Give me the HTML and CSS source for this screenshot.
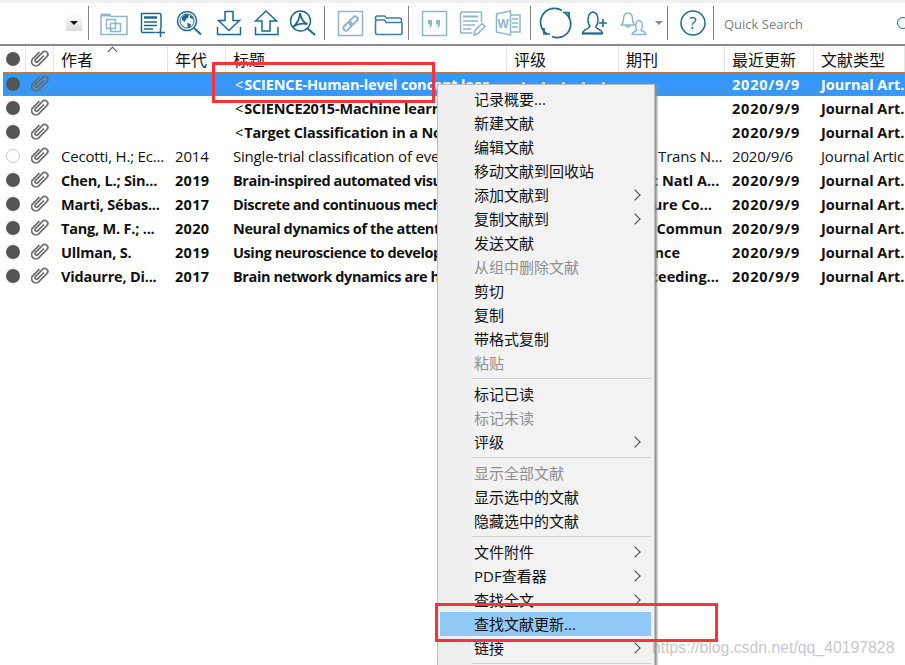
FILE: index.html
```html
<!DOCTYPE html>
<html lang="en">
<head>
  <meta charset="UTF-8">
  <title>EndNote</title>
  <link rel="stylesheet" href="styles.css">
</head>
<body>
  <svg class="defs" width="0" height="0">
    <symbol id="clip" viewBox="0 0 18 20">
      <path d="M13 6.500 L6.800 12.700 a1.600 1.600 0 0 1 -2.300 -2.300 L11.600 3.300 a3 3 0 0 1 4.300 4.200 L7.900 15.600 a4.200 4.200 0 0 1 -6 -6 L8.500 3" fill="none" stroke="#6a6a6a" stroke-width="1.700"/>
    </symbol>
  </svg>

  <div class="toolbar">
    <div class="dropdown"><span class="caret"></span></div>
    <div class="sep first"></div>

    <svg width="38" height="34" viewBox="94 6 38 34" class="faded">
      <path d="M101 15 h9 M101 14.500 v20 h26 v-18 h-16 l-1 -2" />
      <path d="M101 15 h9" stroke-width="3" />
      <path d="M106.500 19.500 h9 v9 h-9 z" />
      <path d="M110.500 23.500 h10 v8 h-10 z" />
    </svg>
    <svg width="39" height="34" viewBox="132 6 39 34" class="dark">
      <path d="M161 28 v-13 a1.500 1.500 0 0 0 -1.500 -1.500 h-18 v18 a1 1 0 0 0 1 1 h13" />
      <path d="M144 17.500 h13" stroke-width="2.500" />
      <path d="M144 22 h13 M144 25.500 h13 M144 29 h9" />
      <path d="M160.500 28 v9 M156 32.500 h9" />
    </svg>
    <svg width="38" height="34" viewBox="171 6 38 34" class="dark">
      <circle cx="187" cy="21" r="9.500" />
      <circle cx="187" cy="21" r="7" stroke-width="1" />
      <path d="M182 17 l4 -3 3 1 -1 3 -2 1 -1 3 -3 -2 z M187 23 l4 1 -1 4 -2 0 z M190 15 l3 2 0 2 -3 -1 z" class="fill-dark" />
      <path d="M194 28 l7 6.500" stroke-width="2" />
    </svg>
    <svg width="39" height="34" viewBox="209 6 39 34" class="dark">
      <path d="M225 11.500 h8 v9 h6.500 l-10.500 10 -10.500 -10 h6.500 z" />
      <path d="M217.500 27 v7.500 h23 v-7.500" />
    </svg>
    <svg width="37" height="34" viewBox="248 6 37 34" class="dark">
      <path d="M262 31 h8 v-10 h6.500 l-10.500 -10 -10.500 10 h6.500 z" />
      <path d="M255.500 27 v7.500 h22.500 v-7.500" />
    </svg>
    <svg width="37" height="34" viewBox="285 6 37 34" class="dark">
      <circle cx="300.500" cy="21" r="10" />
      <path d="M300 13 c0 5 -3 11 -7 14 M293 27 c4 -3 9 -4 14.500 -3 M307.500 24 c-4 -1 -6.500 -6 -7.500 -11" stroke-width="1.800" />
      <path d="M307 28 l8 7" stroke-width="2" />
    </svg>
    <div class="sep gap"></div>

    <svg width="38" height="34" viewBox="331 6 38 34" class="faded">
      <rect x="338.500" y="11.500" width="24" height="24" />
      <g transform="rotate(-45 350.500 23.500)" stroke-width="2">
        <rect x="341.500" y="21" width="10" height="5" rx="2.500" />
        <rect x="349.500" y="21" width="10" height="5" rx="2.500" />
      </g>
    </svg>
    <svg width="37" height="34" viewBox="369 6 37 34" class="mid">
      <path d="M375.500 20 v-2 a2 2 0 0 1 2 -2 h7 l2 2 h13 a2 2 0 0 1 2 2 v2 M375.500 22 a2 2 0 0 1 2 -2 h7 l2 2.500 h14.500 a1 1 0 0 1 1 1 v9.500 a1.500 1.500 0 0 1 -1.500 1.500 h-23 a2 2 0 0 1 -2 -2 z" stroke-width="1.600" />
    </svg>
    <div class="sep gap"></div>

    <svg width="37" height="34" viewBox="415 6 37 34" class="faded">
      <rect x="422.500" y="11.500" width="24" height="24" />
      <path d="M428 20 h4 v4 c0 2 -1 3.500 -3 4 c1 -1 1 -2 1 -3.500 h-2 z M436 20 h4 v4 c0 2 -1 3.500 -3 4 c1 -1 1 -2 1 -3.500 h-2 z" class="fill-faded" />
    </svg>
    <svg width="37" height="34" viewBox="452 6 37 34" class="faded">
      <path d="M481.500 22 v-9 a1 1 0 0 0 -1 -1 h-19 a1 1 0 0 0 -1 1 v19 a1 1 0 0 0 1 1 h11" />
      <path d="M463 16.500 h15" stroke-width="2" />
      <path d="M463 21 h15 M463 25 h12 M463 29 h8" />
      <path d="M474 35 l1 -4.500 7 -7 3 3 -7 7 z" class="fill-white" />
    </svg>
    <svg width="37" height="34" viewBox="489 6 37 34" class="faded">
      <path d="M496.500 14 l14 -3 v24 l-14 -3 z" class="fill-white" />
      <path d="M510 15 h10 v17 h-10 M512 19 h6 M512 23 h6 M512 27 h6" />
      <text x="497.500" y="28" class="word-w">W</text>
    </svg>
    <div class="sep gap-s"></div>

    <svg width="38" height="34" viewBox="537 6 38 34" class="dark">
      <path d="M562 10.500 a13.500 13.500 0 0 0 -15 23.500 M565 13 a13.500 13.500 0 0 1 -13 23.500" stroke-width="1.700" />
      <path d="M563 12.500 h6 v6 M544 28 v6 h6" stroke-width="1.700" />
    </svg>
    <svg width="39" height="34" viewBox="575 6 39 34" class="dark">
      <path d="M590 26 c-3 -3 -3 -13 3 -14 c6 1 6 11 3 14 v1.500 c2 2 6 2 6.500 6 h-20 c.5 -4 4.500 -4 6.500 -6 z" />
      <path d="M582 33.500 h20.500" stroke-width="2" />
      <path d="M603 19 v8 M599 23 h8" stroke-width="1.600" />
    </svg>
    <svg width="38" height="34" viewBox="614 6 38 34" class="faded">
      <path d="M621.500 25 c2 -2 2 -3 2 -6 c0 -4 2 -6 4.500 -6 c2.500 0 4.500 2 4.500 6 c0 3 0 4 2 6 z M626 25 a2 2 0 0 0 4 0" />
      <path d="M637 30 c-2 -2 -2 -9 2 -9.500 c4 .5 4 7.500 2 9.500 c1.500 1.500 4.500 1.500 5 4.500 h-14 c.5 -3 3.500 -3 5 -4.500 z" />
    </svg>
    <span class="mini-caret"></span>
    <div class="sep caret-sep"></div>

    <svg width="38" height="34" viewBox="674 6 38 34" class="dark">
      <circle cx="693" cy="23" r="12" />
      <text x="693" y="29" class="help-q">?</text>
    </svg>
    <div class="sep"></div>

    <span class="quick">Quick Search</span>
    <span class="search-ring"></span>
  </div>

  <div class="table">
    <div class="row head">
      <div class="cell mark"><span class="dot"></span></div>
      <div class="cell clip"><svg width="18" height="20"><use href="#clip"/></svg></div>
      <div class="cell author">作者<span class="sort"></span></div>
      <div class="cell">年代</div>
      <div class="cell">标题</div>
      <div class="cell">评级</div>
      <div class="cell">期刊</div>
      <div class="cell">最近更新</div>
      <div class="cell">文献类型</div>
    </div>

    <div class="row sel">
      <div class="cell mark"><span class="dot"></span></div>
      <div class="cell clip"><svg width="18" height="20"><use href="#clip"/></svg></div>
      <div class="cell"></div>
      <div class="cell"></div>
      <div class="cell caps"><span class="lt">&lt;</span>SCIENCE-Human-level concept lear</div>
      <div class="cell stars"><i></i><i></i><i></i><i></i><i></i></div>
      <div class="cell"></div>
      <div class="cell date">2020/9/9</div>
      <div class="cell">Journal Art...</div>
    </div>
    <div class="row unread">
      <div class="cell mark"><span class="dot"></span></div>
      <div class="cell clip"><svg width="18" height="20"><use href="#clip"/></svg></div>
      <div class="cell"></div>
      <div class="cell"></div>
      <div class="cell caps"><span class="lt">&lt;</span>SCIENCE2015-Machine learning</div>
      <div class="cell"></div>
      <div class="cell"></div>
      <div class="cell date">2020/9/9</div>
      <div class="cell">Journal Art...</div>
    </div>
    <div class="row unread">
      <div class="cell mark"><span class="dot"></span></div>
      <div class="cell clip"><svg width="18" height="20"><use href="#clip"/></svg></div>
      <div class="cell"></div>
      <div class="cell"></div>
      <div class="cell caps"><span class="lt">&lt;</span>Target Classification in a Noisy</div>
      <div class="cell"></div>
      <div class="cell"></div>
      <div class="cell date">2020/9/9</div>
      <div class="cell">Journal Art...</div>
    </div>
    <div class="row read">
      <div class="cell mark"><span class="dot empty"></span></div>
      <div class="cell clip"><svg width="18" height="20"><use href="#clip"/></svg></div>
      <div class="cell">Cecotti, H.; Ec...</div>
      <div class="cell">2014</div>
      <div class="cell">Single-trial classification of event</div>
      <div class="cell"></div>
      <div class="cell">IEEE Trans N...</div>
      <div class="cell">2020/9/6</div>
      <div class="cell">Journal Article</div>
    </div>
    <div class="row unread">
      <div class="cell mark"><span class="dot"></span></div>
      <div class="cell clip"><svg width="18" height="20"><use href="#clip"/></svg></div>
      <div class="cell name">Chen, L.; Sin...</div>
      <div class="cell year">2019</div>
      <div class="cell title">Brain-inspired automated visual</div>
      <div class="cell"></div>
      <div class="cell">Proc Natl A...</div>
      <div class="cell date">2020/9/9</div>
      <div class="cell">Journal Art...</div>
    </div>
    <div class="row unread">
      <div class="cell mark"><span class="dot"></span></div>
      <div class="cell clip"><svg width="18" height="20"><use href="#clip"/></svg></div>
      <div class="cell name">Marti, Sébas...</div>
      <div class="cell year">2017</div>
      <div class="cell title">Discrete and continuous mechanisms</div>
      <div class="cell"></div>
      <div class="cell">Nature Co...</div>
      <div class="cell date">2020/9/9</div>
      <div class="cell">Journal Art...</div>
    </div>
    <div class="row unread">
      <div class="cell mark"><span class="dot"></span></div>
      <div class="cell clip"><svg width="18" height="20"><use href="#clip"/></svg></div>
      <div class="cell name">Tang, M. F.; ...</div>
      <div class="cell year">2020</div>
      <div class="cell title">Neural dynamics of the attention</div>
      <div class="cell"></div>
      <div class="cell">Nat Commun</div>
      <div class="cell date">2020/9/9</div>
      <div class="cell">Journal Art...</div>
    </div>
    <div class="row unread">
      <div class="cell mark"><span class="dot"></span></div>
      <div class="cell clip"><svg width="18" height="20"><use href="#clip"/></svg></div>
      <div class="cell name">Ullman, S.</div>
      <div class="cell year">2019</div>
      <div class="cell title">Using neuroscience to develop</div>
      <div class="cell"></div>
      <div class="cell">Science</div>
      <div class="cell date">2020/9/9</div>
      <div class="cell">Journal Art...</div>
    </div>
    <div class="row unread">
      <div class="cell mark"><span class="dot"></span></div>
      <div class="cell clip"><svg width="18" height="20"><use href="#clip"/></svg></div>
      <div class="cell name">Vidaurre, Di...</div>
      <div class="cell year">2017</div>
      <div class="cell title">Brain network dynamics are hierarchically</div>
      <div class="cell"></div>
      <div class="cell">Proceeding...</div>
      <div class="cell date">2020/9/9</div>
      <div class="cell">Journal Art...</div>
    </div>
  </div>

  <div class="menu">
    <div class="item">记录概要...</div>
    <div class="item">新建文献</div>
    <div class="item">编辑文献</div>
    <div class="item">移动文献到回收站</div>
    <div class="item sub">添加文献到</div>
    <div class="item sub">复制文献到</div>
    <div class="item">发送文献</div>
    <div class="item off">从组中删除文献</div>
    <div class="item">剪切</div>
    <div class="item">复制</div>
    <div class="item">带格式复制</div>
    <div class="item off">粘贴</div>
    <div class="rule"></div>
    <div class="item">标记已读</div>
    <div class="item off">标记未读</div>
    <div class="item sub">评级</div>
    <div class="rule"></div>
    <div class="item off">显示全部文献</div>
    <div class="item">显示选中的文献</div>
    <div class="item">隐藏选中的文献</div>
    <div class="rule"></div>
    <div class="item sub">文件附件</div>
    <div class="item sub">PDF查看器</div>
    <div class="item sub">查找全文</div>
    <div class="item hot">查找文献更新...</div>
    <div class="item sub">链接</div>
    <div class="rule"></div>
  </div>

  <div class="callout callout-title"></div>
  <div class="callout callout-item"></div>
  <div class="watermark">https://blog.csdn.net/qq_40197828</div>
</body>
</html>
```

FILE: styles.css
```css
* {
  box-sizing: border-box;
}

html, body {
  height: 665px;
  overflow: hidden;
}

body {
  position: relative;
  margin: 0;
  background-color: #fff;
  color: #111;
  font-family: "Open Sans", "Noto Sans CJK SC", sans-serif;
  font-size: 14px;
}

.defs {
  position: absolute;
}

/* toolbar */
.toolbar {
  display: flex;
  align-items: center;
  height: 46px;
  padding: 0 0 1px 66px;
  border-top: 3px solid #f0f0f0;
  border-bottom: 2px solid #8c8c8c;
  background-color: #fff;
  overflow: hidden;
}

.toolbar svg {
  flex: none;
  fill: none;
  stroke-width: 1.5;
}

.dark { stroke: #1d6a8e; }
.mid { stroke: #3f7f9d; }
.faded { stroke: #8db6cb; }

.fill-dark { fill: #1d6a8e; stroke: none; }
.fill-faded { fill: #8db6cb; stroke: none; }
.fill-white { fill: #fff; }

.dropdown {
  display: flex;
  align-items: center;
  justify-content: center;
  flex: none;
  width: 16px;
  height: 16px;
  background: linear-gradient(to bottom, #fbfbfb, #dcdcdc);
}

.caret {
  border-top: 4px solid #111;
  border-left: 4px solid transparent;
  border-right: 4px solid transparent;
}

.mini-caret {
  flex: none;
  margin: 0 4px 0 3px;
  border-top: 4px solid #8a8a8a;
  border-left: 4px solid transparent;
  border-right: 4px solid transparent;
}

.sep {
  flex: none;
  width: 1px;
  height: 34px;
  margin: 0 10px 0 1px;
  background-color: #808080;
}
.sep.first { margin: 0 5px 0 6px; }
.sep.gap { margin: 0 6px 0 2px; }
.sep.gap-s { margin: 0 6px 0 4px; }
.sep.caret-sep { margin: 0 6px 0 0; }

.word-w {
  font-family: "Liberation Sans", sans-serif;
  font-size: 12px;
  font-weight: 700;
  fill: #8db6cb;
  stroke: none;
}

.help-q {
  font-family: "Open Sans", sans-serif;
  font-size: 17px;
  text-anchor: middle;
  fill: #1d6a8e;
  stroke: none;
}

.quick {
  flex: none;
  width: 173px;
  margin-top: 2px;
  color: #808080;
  font-size: 13px;
}

.search-ring {
  flex: none;
  width: 12px;
  height: 12px;
  border: 1.500px solid #1d6a8e;
  border-radius: 50%;
}

/* table */
.row {
  display: grid;
  grid-template-columns: 26px 28px 114px 58px 281px 112px 106px 89px 91px;
  height: 24px;
  align-items: center;
  font-size: 15px;
  line-height: 24px;
}

.cell {
  padding-left: 7px;
  white-space: nowrap;
  overflow: hidden;
}

.head {
  height: 26px;
  font-size: 16px;
}

.head .cell {
  height: 26px;
  line-height: 28px;
  border-right: 1px solid #e6e6e6;
}

.head .author {
  position: relative;
  overflow: visible;
}

.sort {
  position: absolute;
  left: 55px;
  top: 2px;
  width: 7px;
  height: 7px;
  border-top: 1px solid #555;
  border-left: 1px solid #555;
  transform: rotate(45deg);
}

.mark, .clip {
  display: flex;
  align-items: center;
  padding-left: 0;
}

.mark {
  padding-left: 6px;
}

.clip {
  padding-left: 5px;
}

.dot {
  width: 14px;
  height: 14px;
  border-radius: 50%;
  background-color: #555;
}

.dot.empty {
  background-color: transparent;
  border: 1.500px solid #c8c8c8;
}

.read .cell {
  letter-spacing: -0.200px;
}

.unread .cell {
  height: 24px;
  font-size: 14.500px;
  font-weight: 700;
  line-height: 26px;
}

.unread .year {
  letter-spacing: 0.300px;
}

.unread .name {
  letter-spacing: -0.200px;
}

.unread .title {
  letter-spacing: -0.400px;
}

.unread .date, .sel .date {
  letter-spacing: 0.800px;
}

.caps {
  letter-spacing: -0.150px;
}

.lt {
  margin: 0 1px 0 2px;
  font-weight: 400;
}

.sel {
  margin-left: 3px;
  grid-template-columns: 23px 28px 114px 58px 281px 112px 106px 89px 91px;
  background-color: #3797fc;
  color: #fff;
  font-size: 14.500px;
  font-weight: 700;
  outline: 1px dotted #c9763c;
  outline-offset: -1px;
}

.sel .cell {
  height: 24px;
  line-height: 26px;
}

.sel .mark {
  padding-left: 3px;
}

.stars {
  display: flex;
  gap: 17px;
  align-items: center;
  padding-left: 15px;
  padding-bottom: 1px;
}

.stars i {
  width: 3px;
  height: 3px;
  border-radius: 50%;
  background-color: #fff;
}

/* context menu */
.menu {
  position: absolute;
  left: 437px;
  top: 84px;
  width: 218px;
  padding: 2px 3px 0 2px;
  border: 1px solid #bdbdbd;
  background: linear-gradient(to right, #eeeeee 33px, #f2f2f2 33px);
  box-shadow: 2px 2px 2px #8f8f8f;
  font-size: 15px;
}

.item {
  display: flex;
  align-items: center;
  justify-content: space-between;
  height: 24px;
  padding: 0 12px 0 34px;
  line-height: 24px;
  white-space: nowrap;
}

.item.off {
  color: #8f8f8f;
}

.item.hot {
  background-color: #90c8f6;
}

.item.sub::after {
  content: "";
  width: 7px;
  height: 7px;
  border-top: 1px solid #444;
  border-right: 1px solid #444;
  transform: rotate(45deg);
}

.rule {
  height: 1px;
  margin: 3px 0 3px 32px;
  background-color: #d2d2d2;
}

/* red marks drawn over the screenshot */
.callout {
  position: absolute;
  border: 3.500px solid #fb3338;
}

.callout-title {
  left: 212px;
  top: 62px;
  width: 223px;
  height: 41px;
}

.callout-item {
  left: 435px;
  top: 603px;
  width: 283px;
  height: 39px;
}

.watermark {
  position: absolute;
  left: 652px;
  top: 639px;
  color: rgba(150, 150, 150, 0.55);
  font-family: "Liberation Sans", sans-serif;
  font-size: 15.800px;
  white-space: nowrap;
}
```
